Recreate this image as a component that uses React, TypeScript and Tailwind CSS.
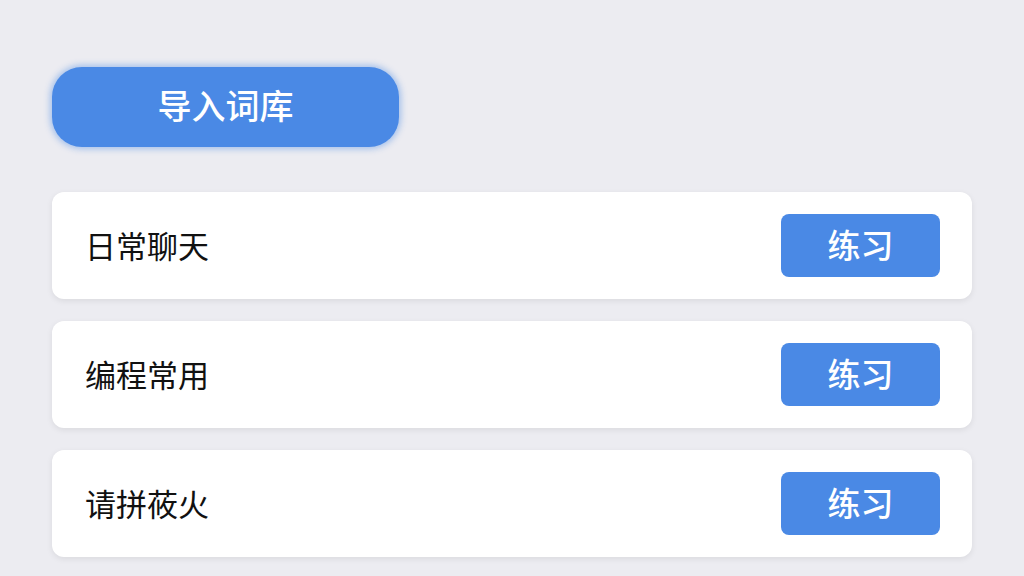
const lists = ['日常聊天', '编程常用', '请拼莜火'];

export default function App() {
  return (
    <div
      className="min-h-[576px] w-full bg-[#ececf1] px-[52px] pt-[67px]"
      style={{ fontFamily: '"Noto Sans CJK SC", "Noto Sans", sans-serif' }}
    >
      {/* 导入按钮 */}
      <button className="flex h-[80px] w-[347px] items-center justify-center rounded-[30px] bg-[#4a89e5] pb-[6px] text-[34px] font-medium text-white shadow-[0_0_6px_2px_rgba(74,137,229,0.45)]">
        导入词库
      </button>

      {/* 词库列表 */}
      <div className="mt-[45px] flex flex-col gap-[22px]">
        {lists.map((name) => (
          <div
            key={name}
            className="flex h-[107px] w-[920px] items-center justify-between rounded-[12px] bg-white pl-[33px] pr-[32px] shadow-[0_2px_6px_rgba(0,0,0,0.08)]"
          >
            <span className="text-[31px] text-[#111]">{name}</span>
            <button className="flex h-[63px] w-[159px] items-center justify-center rounded-[8px] bg-[#4a89e5] pb-[2px] text-[33px] font-medium text-white">
              练习
            </button>
          </div>
        ))}
      </div>
    </div>
  );
}
